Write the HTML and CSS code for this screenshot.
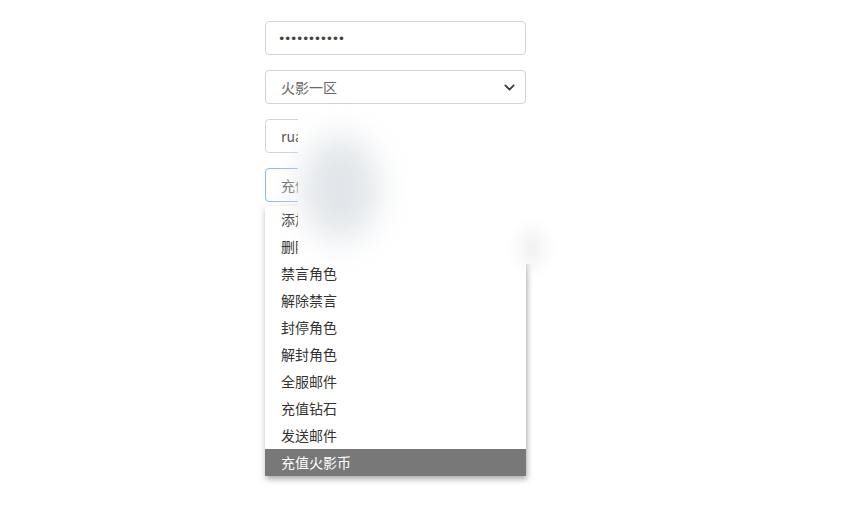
FILE: index.html
```html
<html>
<head>
<meta charset="utf-8">
<meta name="viewport" content="width=device-width, initial-scale=1">
<title>GM</title>
<link rel="stylesheet" href="styles.css">
</head>
<body>
<div class="panel">
  <div class="field"><input class="control pwd" type="text" value="•••••••••••" readonly></div>
  <div class="field">
    <div class="control select">
      <span>火影一区</span>
      <svg class="chev" width="11" height="11" viewBox="0 0 16 16"><path d="M2 5l6 6 6-6" fill="none" stroke="#343a40" stroke-width="2.6" stroke-linecap="round" stroke-linejoin="round"/></svg>
    </div>
  </div>
  <div class="field"><input class="control" type="text" value="ruan" readonly></div>
  <div class="field dropwrap">
    <div class="control select focus"><span>充值火影币</span></div>
    <ul class="options">
      <li>添加角色</li>
      <li>删除角色</li>
      <li>禁言角色</li>
      <li>解除禁言</li>
      <li>封停角色</li>
      <li>解封角色</li>
      <li>全服邮件</li>
      <li>充值钻石</li>
      <li>发送邮件</li>
      <li class="active">充值火影币</li>
    </ul>
  </div>
  <!-- smudged-out area -->
  <div class="smudge"><div class="spot"></div><div class="spot small"></div></div>
</div>
</body>
</html>
```

FILE: styles.css
```css
body {
  margin: 0;
  background: #fff;
  font-family: "Noto Sans CJK SC", "Liberation Sans", sans-serif;
  font-size: 14px;
  color: #555;
}
.panel {
  position: relative;
  width: 261px;
  margin-left: 265px;
  padding-top: 21px;
  display: flex;
  flex-direction: column;
  gap: 15px;
}
.field {
  position: relative;
}
.control {
  box-sizing: border-box;
  display: flex;
  align-items: center;
  width: 100%;
  height: 34px;
  padding: 0 15px;
  border: 1px solid #ced4da;
  border-radius: 4px;
  background: #fff;
  font: inherit;
  color: #555;
  outline: none;
}
.pwd {
  padding-left: 12px;
  letter-spacing: -1.4px;
  font-family: "DejaVu Sans", sans-serif;
  font-size: 12.5px;
  color: #444;
}
.select {
  justify-content: space-between;
  color: #666;
}
.chev {
  margin-right: -5px;
}
.focus {
  border-color: #8bbcf0;
}
.options {
  position: absolute;
  left: 0;
  top: 38px;
  width: 100%;
  margin: 0;
  padding: 0;
  list-style: none;
  background: #fff;
  box-shadow: 1px 3px 6px rgba(0, 0, 0, 0.35);
  z-index: 2;
}
.options li {
  height: 27px;
  line-height: 27px;
  padding-left: 16px;
  color: #333;
}
.options li.active {
  background: #787878;
  color: #fff;
}
.smudge {
  position: absolute;
  left: 33px;
  top: 108px;
  width: 246px;
  height: 156px;
  background: #fff;
  border-radius: 12px;
  z-index: 3;
}
.spot {
  position: absolute;
  left: 2px;
  top: 28px;
  width: 80px;
  height: 105px;
  border-radius: 50%;
  background: #e2e6ea;
  filter: blur(16px);
}
.spot.small {
  left: 222px;
  top: 120px;
  width: 24px;
  height: 40px;
  background: #f0f0f0;
  filter: blur(8px);
}
```
